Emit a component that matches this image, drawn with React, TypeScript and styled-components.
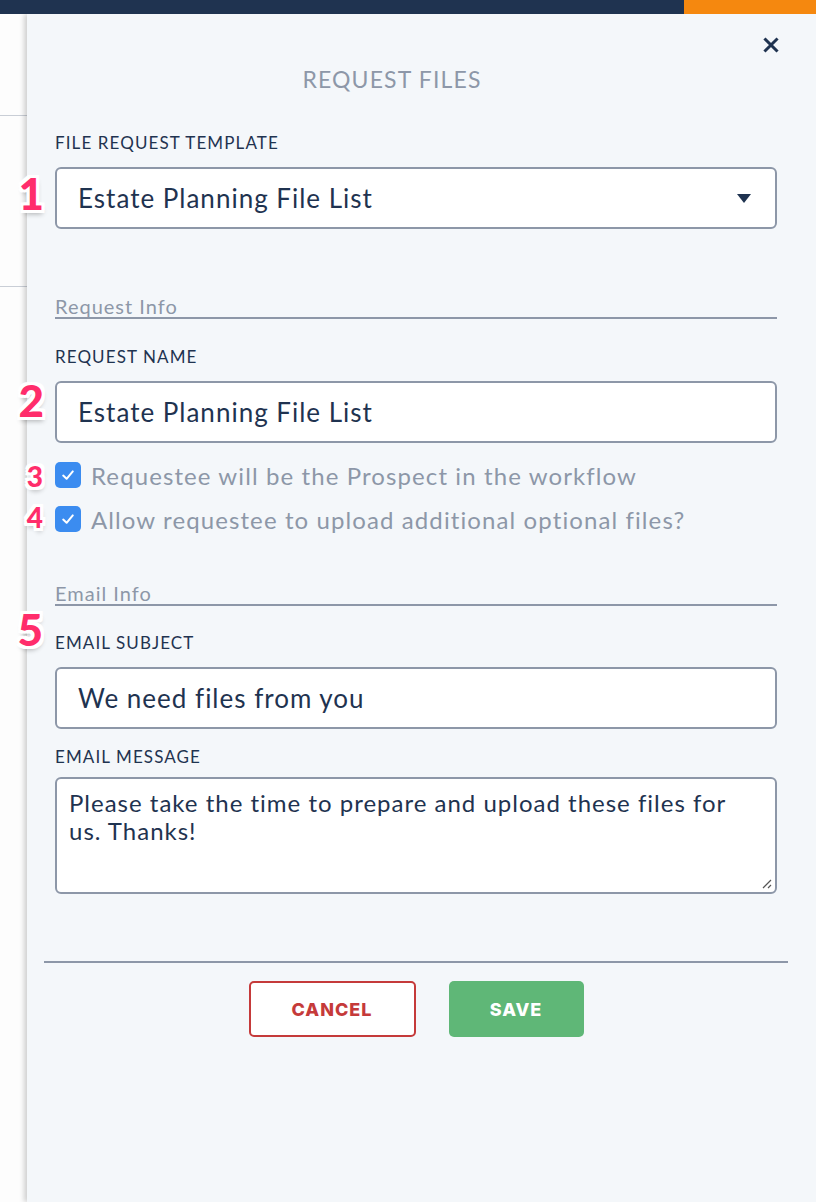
import React from 'react';
import styled, { createGlobalStyle } from 'styled-components';

const GlobalStyle = createGlobalStyle`
  html, body {
    margin: 0;
    padding: 0;
    background: #fdfdfd;
  }
  * {
    box-sizing: border-box;
  }
`;

const navy = '#1f3350';
const gray = '#8d97a8';

type FieldProps = {
  label: string;
  mark?: number;
  markTop?: number;
  labelMark?: boolean;
  tight?: boolean;
  mt: number;
  children: React.ReactNode;
};

// numbered pink callouts are annotations laid over the left edge of the form
const Field: React.FC<FieldProps> = ({ label, mark, markTop = 0, labelMark, tight, mt, children }) => (
  <FieldWrap $mt={mt}>
    <Label $tight={tight}>
      {mark && labelMark ? <Mark $top={markTop}>{mark}</Mark> : null}
      {label}
    </Label>
    <Control>
      {mark && !labelMark ? <Mark $top={markTop}>{mark}</Mark> : null}
      {children}
    </Control>
  </FieldWrap>
);

const CheckRow: React.FC<{ mark: number; text: string; markTop: number }> = ({ mark, text, markTop }) => (
  <Check>
    <Mark $top={markTop} $small>
      {mark}
    </Mark>
    <Box>
      <svg width="16" height="16" viewBox="0 0 16 16">
        <path d="M3.2 8.6 L6.6 11.8 L12.8 4.4" fill="none" stroke="#fff" strokeWidth="2" strokeLinecap="round" strokeLinejoin="round" />
      </svg>
    </Box>
    <CheckText>{text}</CheckText>
  </Check>
);

export default function App() {
  return (
    <>
      <GlobalStyle />
      <TopBar>
        <Accent />
      </TopBar>
      <Page>
        <Behind>
          <BehindLine $top={101} />
          <BehindLine $top={272} />
        </Behind>
        <Panel>
          <Close width="16" height="16" viewBox="0 0 16 16">
            <path d="M2.5 2.5 L13.5 13.5 M13.5 2.5 L2.5 13.5" stroke={navy} strokeWidth="3" strokeLinecap="square" />
          </Close>
          <Title>Request Files</Title>

          <Field label="File Request Template" mark={1} markTop={4} mt={39}>
            <Select>
              Estate Planning File List
              <Caret />
            </Select>
          </Field>

          <Section $mt={66}>Request Info</Section>

          <Field label="Request Name" mark={2} markTop={-3} mt={27}>
            <Input>Estate Planning File List</Input>
          </Field>

          <Checks>
            <CheckRow mark={3} markTop={1} text="Requestee will be the Prospect in the workflow" />
            <CheckRow mark={4} markTop={-2} text="Allow requestee to upload additional optional files?" />
          </Checks>

          <Section $mt={49}>Email Info</Section>

          <Field label="Email Subject" mark={5} markTop={-25} labelMark mt={26}>
            <Input>We need files from you</Input>
          </Field>

          <Field label="Email Message" tight mt={17}>
            <TextArea>
              Please take the time to prepare and upload these files for us. Thanks!
              <Grip width="12" height="12" viewBox="0 0 12 12">
                <path d="M11 3 L3 11 M11 8 L8 11" stroke="#555" strokeWidth="1.2" />
              </Grip>
            </TextArea>
          </Field>

          <Footer>
            <CancelButton>Cancel</CancelButton>
            <SaveButton>Save</SaveButton>
          </Footer>
        </Panel>
      </Page>
    </>
  );
}

const TopBar = styled.div`
  height: 14px;
  background: ${navy};
  display: flex;
  justify-content: flex-end;
`;

const Accent = styled.div`
  width: 132px;
  background: #f5880f;
`;

const Page = styled.div`
  display: flex;
  height: 1188px;
  overflow: hidden;
`;

const Behind = styled.div`
  position: relative;
  width: 27px;
  flex-shrink: 0;
  background: #fdfdfd;
`;

const BehindLine = styled.div<{ $top: number }>`
  position: absolute;
  left: 0;
  right: 0;
  top: ${(p) => p.$top}px;
  height: 1px;
  background: #c9ced6;
`;

const Panel = styled.div`
  position: relative;
  flex: 1;
  background: #f4f7fa;
  box-shadow: -3px 0 5px rgba(0, 0, 0, 0.18);
  padding: 0 39px 0 28px;
  font-family: Lato, 'Open Sans', sans-serif;
  color: ${navy};
`;

const Close = styled.svg`
  position: absolute;
  top: 23px;
  right: 37px;
`;

const Title = styled.h1`
  margin: 51px 0 0;
  padding-right: 48px;
  text-align: center;
  font-size: 23px;
  font-weight: 400;
  letter-spacing: 1.15px;
  text-transform: uppercase;
  color: ${gray};
  line-height: 28px;
`;

const FieldWrap = styled.div<{ $mt: number }>`
  margin-top: ${(p) => p.$mt}px;
`;

const Label = styled.div<{ $tight?: boolean }>`
  position: relative;
  font-size: 17px;
  letter-spacing: 1.1px;
  text-transform: uppercase;
  line-height: 22px;
  margin-bottom: ${(p) => (p.$tight ? 9 : 13)}px;
  color: ${navy};
`;

const Control = styled.div`
  position: relative;
`;

const Mark = styled.span<{ $top: number; $small?: boolean }>`
  position: absolute;
  right: 100%;
  margin-right: ${(p) => (p.$small ? 12 : 11)}px;
  top: ${(p) => p.$top}px;
  font-family: Lato, sans-serif;
  font-weight: 900;
  font-size: ${(p) => (p.$small ? 28 : 44)}px;
  line-height: 1;
  color: #ff2d6b;
  text-shadow: -3px -3px 0 #fff, 3px -3px 0 #fff, -3px 3px 0 #fff, 3px 3px 0 #fff,
    0 3px 0 #fff, 0 -3px 0 #fff, 3px 0 0 #fff, -3px 0 0 #fff, 1px 4px 5px rgba(0, 0, 0, 0.3);
`;

const Input = styled.div`
  height: 62px;
  display: flex;
  align-items: center;
  padding: 0 21px;
  background: #fff;
  border: 2px solid ${gray};
  border-radius: 6px;
  font-size: 26px;
  letter-spacing: 1px;
  color: ${navy};
`;

const Select = styled(Input)`
  justify-content: space-between;
  padding-right: 24px;
`;

const Caret = styled.span`
  width: 0;
  height: 0;
  border-left: 7px solid transparent;
  border-right: 7px solid transparent;
  border-top: 9px solid ${navy};
`;

const Section = styled.div<{ $mt: number }>`
  margin-top: ${(p) => p.$mt}px;
  font-size: 20px;
  letter-spacing: 1px;
  line-height: 22px;
  color: ${gray};
  border-bottom: 2px solid ${gray};
`;

const Checks = styled.div`
  margin-top: 18px;
  display: flex;
  flex-direction: column;
  gap: 16px;
`;

const Check = styled.div`
  position: relative;
  display: flex;
  align-items: center;
  gap: 10px;
  height: 28px;
`;

const Box = styled.span`
  width: 26px;
  height: 26px;
  border-radius: 5px;
  background: #3b8cf0;
  display: flex;
  align-items: center;
  justify-content: center;
`;

const CheckText = styled.span`
  font-size: 24px;
  color: ${gray};
  letter-spacing: 1.1px;
`;

const TextArea = styled.div`
  position: relative;
  height: 117px;
  padding: 10px 20px 0 12px;
  background: #fff;
  border: 2px solid ${gray};
  border-radius: 6px;
  font-size: 24px;
  letter-spacing: 1px;
  line-height: 28px;
  color: ${navy};
`;

const Grip = styled.svg`
  position: absolute;
  right: 3px;
  bottom: 3px;
`;

const Footer = styled.div`
  margin: 67px -11px 0 -11px;
  padding-top: 18px;
  border-top: 2px solid ${gray};
  display: flex;
  justify-content: center;
  gap: 33px;
`;

const Button = styled.button`
  height: 56px;
  border-radius: 5px;
  font-family: Inter, Lato, sans-serif;
  font-weight: 800;
  font-size: 18px;
  text-transform: uppercase;
  letter-spacing: 1px;
  cursor: pointer;
`;

const CancelButton = styled(Button)`
  width: 167px;
  background: #fff;
  border: 2px solid #c53a3a;
  color: #c53a3a;
`;

const SaveButton = styled(Button)`
  width: 135px;
  background: #5fb777;
  border: none;
  color: #fff;
`;
